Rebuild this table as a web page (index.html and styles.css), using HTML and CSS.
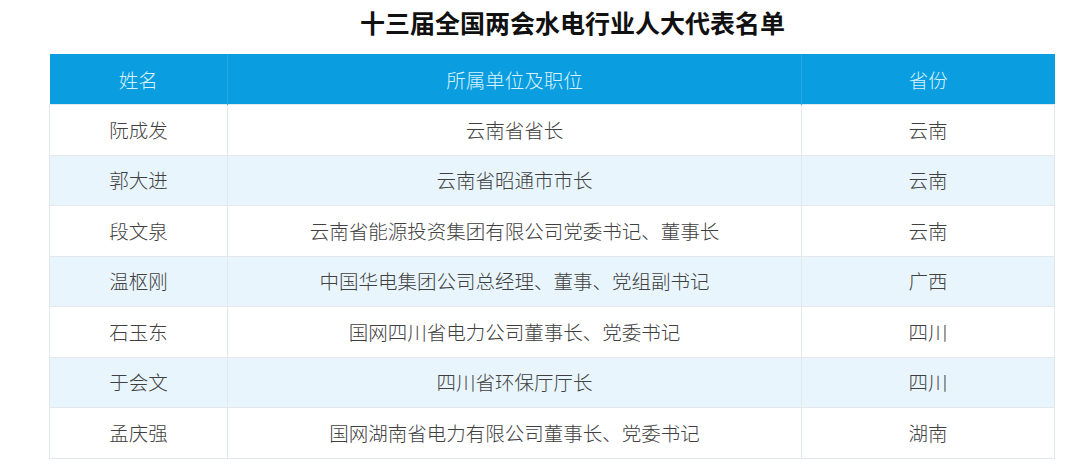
FILE: index.html
```html
<!DOCTYPE html>
<html lang="zh-CN">
<head>
<meta charset="utf-8">
<title>十三届全国两会水电行业人大代表名单</title>
<link rel="stylesheet" href="styles.css">
</head>
<body>
<div class="page">
  <h1 class="title">十三届全国两会水电行业人大代表名单</h1>
  <table class="roster">
    <colgroup>
      <col class="c-name">
      <col class="c-unit">
      <col class="c-prov">
    </colgroup>
    <thead>
      <tr><th>姓名</th><th>所属单位及职位</th><th>省份</th></tr>
    </thead>
    <tbody>
      <tr><td>阮成发</td><td>云南省省长</td><td>云南</td></tr>
      <tr><td>郭大进</td><td>云南省昭通市市长</td><td>云南</td></tr>
      <tr><td>段文泉</td><td>云南省能源投资集团有限公司党委书记、董事长</td><td>云南</td></tr>
      <tr><td>温枢刚</td><td>中国华电集团公司总经理、董事、党组副书记</td><td>广西</td></tr>
      <tr><td>石玉东</td><td>国网四川省电力公司董事长、党委书记</td><td>四川</td></tr>
      <tr><td>于会文</td><td>四川省环保厅厅长</td><td>四川</td></tr>
      <tr><td>孟庆强</td><td>国网湖南省电力有限公司董事长、党委书记</td><td>湖南</td></tr>
    </tbody>
  </table>
</div>
</body>
</html>
```

FILE: styles.css
```css
html, body {
  margin: 0;
  padding: 0;
  background: #ffffff;
}

body {
  font-family: "Noto Sans CJK SC", "Noto Sans", sans-serif;
  color: #404040;
}

.page {
  padding: 7px 26px 0 49px;
}

.title {
  margin: 0;
  height: 47px;
  font-size: 25px;
  line-height: 30px;
  font-weight: 700;
  color: #111111;
  text-align: center;
  padding-left: 42px;
  box-sizing: border-box;
}

.roster {
  width: 1005px;
  border-collapse: collapse;
  table-layout: fixed;
  font-size: 19.5px;
}

.c-name { width: 178px; }
.c-unit { width: 574px; }
.c-prov { width: 253px; }

.roster th {
  height: 50px;
  padding: 0;
  background: #0a9de0;
  color: #d9f2fd;
  font-weight: 300;
  font-size: 19.5px;
  text-align: center;
  border-left: 1px solid rgba(255, 255, 255, 0.12);
}

.roster th:first-child {
  border-left: none;
}

.roster td {
  height: 49.5px;
  padding: 0;
  text-align: center;
  border: 1px solid #e3e8ec;
  line-height: 24px;
  font-weight: 300;
}

.roster tbody tr:nth-child(even) td {
  background: #e9f5fd;
}
```
